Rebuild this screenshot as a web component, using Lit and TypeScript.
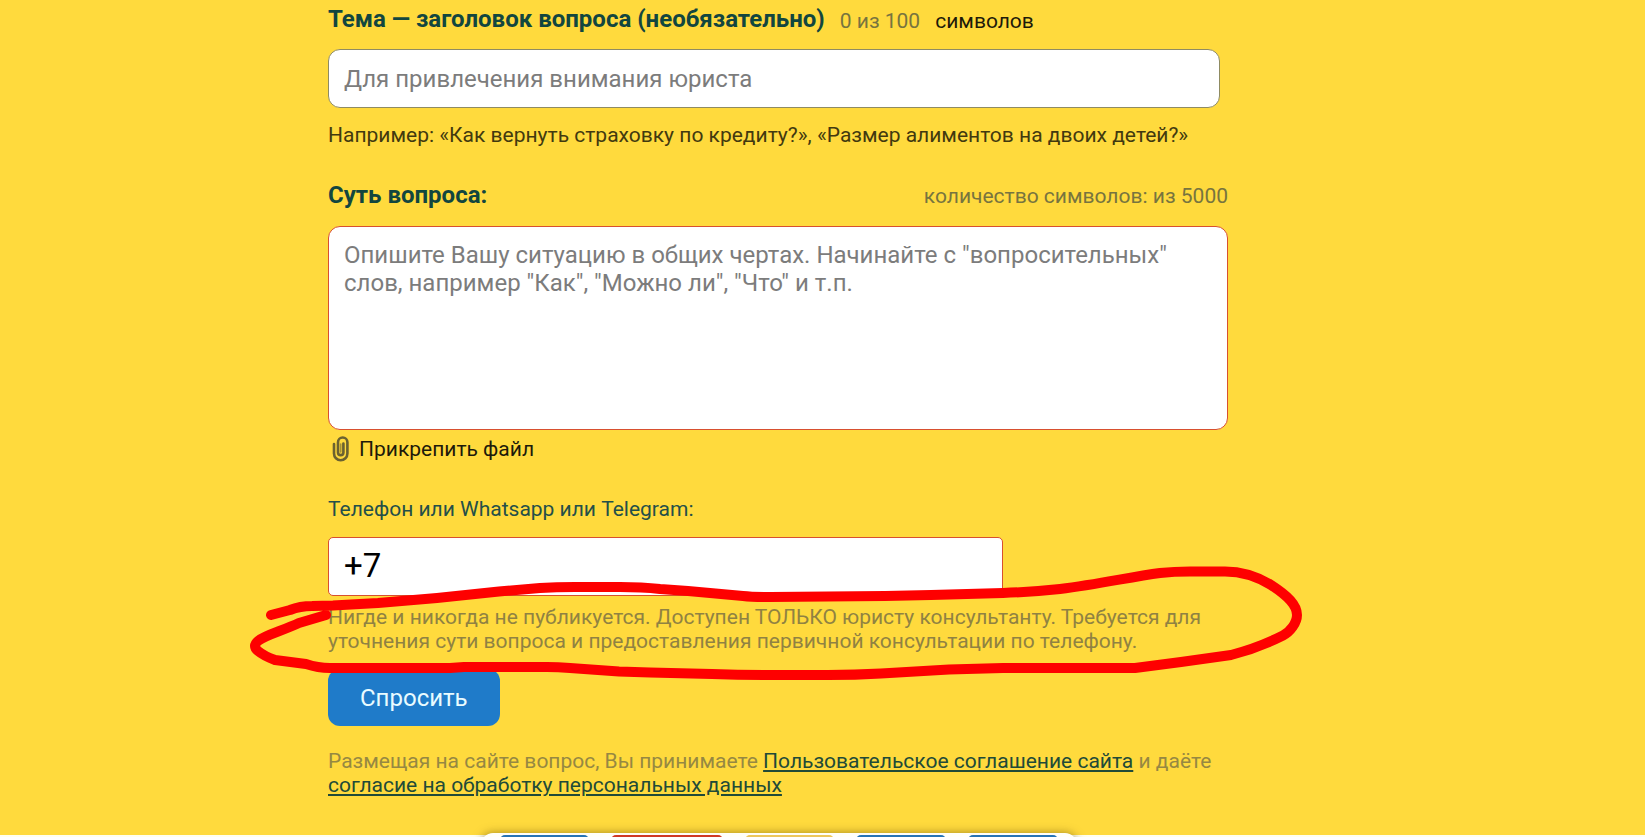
import { LitElement, html, css } from "lit";
import { customElement } from "lit/decorators.js";

@customElement("app-root")
export class AppRoot extends LitElement {
  static styles = css`
    :host {
      display: block;
      position: relative;
      height: 100vh;
      overflow: hidden;
      background: #fffff0;
      font-family: Roboto, "Noto Sans", sans-serif;
      font-size: 21px;
      line-height: 24px;
      color: #1d1a0a;
    }
    * {
      box-sizing: border-box;
    }
    .page {
      background: #ffda3d;
      padding: 5px 89px 38px 0;
    }
    .form {
      position: relative;
      max-width: 900px;
      margin: 0 auto;
    }
    .head {
      display: flex;
      align-items: flex-end;
      gap: 15px;
      padding-bottom: 16px;
    }
    .head.spread {
      justify-content: space-between;
      align-items: baseline;
      padding: 34px 0 17px;
    }
    .title {
      font-size: 24px;
      line-height: 28px;
      font-weight: 700;
      color: #12463f;
    }
    .meta {
      color: #77743f;
    }
    .field {
      display: block;
      width: 100%;
      margin: 0;
      padding: 0 15px;
      border: 1px solid #d8502f;
      border-radius: 12px;
      background: #fff;
      font: 400 24px/28px Roboto, "Noto Sans", sans-serif;
      color: #000;
      outline: none;
    }
    .field::placeholder {
      color: #7c7c7c;
      opacity: 1;
    }
    .topic {
      width: calc(100% - 8px);
      height: 59px;
      border-color: #8f8b62;
    }
    .body {
      height: 204px;
      padding: 14px 15px;
      resize: none;
    }
    .phone {
      width: 75%;
      height: 59px;
      padding-bottom: 2px;
      border-radius: 5px;
      font-size: 33px;
    }
    .example {
      margin: 15px 0 0;
      color: #42390f;
    }
    .attach {
      display: flex;
      align-items: center;
      gap: 10px;
      margin-top: 6px;
      padding: 0 0 0 4px;
      border: 0;
      background: none;
      font: inherit;
      color: inherit;
    }
    .clip {
      display: block;
      width: 17px;
      height: 26px;
    }
    .phone-label {
      display: block;
      padding: 35px 0 16px;
      color: #244f49;
    }
    .hint {
      margin: 9px 0 16px;
      color: #908242;
    }
    .send {
      display: block;
      height: 57px;
      padding: 0 32px;
      border: 0;
      border-radius: 12px;
      background: #1f7bc9;
      color: #e9fbff;
      font: 400 24px/28px Roboto, "Noto Sans", sans-serif;
    }
    .terms {
      margin: 23px 0 0;
      color: #968842;
    }
    .terms a {
      color: #214a38;
      text-decoration-thickness: 2px;
      text-underline-offset: 2px;
    }
    .scribble {
      position: absolute;
      left: -80px;
      top: 555px;
      width: 1060px;
      height: 130px;
      pointer-events: none;
    }
    .dock {
      position: absolute;
      left: calc(50% - 342px);
      top: calc(100% - 4px);
      display: flex;
      gap: 22px;
      width: 596px;
      height: 60px;
      padding: 2px 19px;
      border-radius: 12px;
      background: #fffffa;
      box-shadow: 0 0 10px rgba(90, 70, 0, 0.55);
    }
    .tile {
      flex: 89;
      border-radius: 5px;
      background: #2673b5;
    }
    .tile.red {
      flex: 111;
      background: #cf3a25;
    }
    .tile.sand {
      background: #ecc65c;
    }
  `;

  render() {
    return html`
      <main class="page">
        <form class="form" @submit=${(e: Event) => e.preventDefault()}>
          <div class="head">
            <label class="title" for="topic">Тема — заголовок вопроса (необязательно)</label>
            <span class="meta">0 из 100</span>
            <span>символов</span>
          </div>
          <input class="field topic" id="topic" type="text" placeholder="Для привлечения внимания юриста" />
          <p class="example">Например: «Как вернуть страховку по кредиту?», «Размер алиментов на двоих детей?»</p>

          <div class="head spread">
            <label class="title" for="body">Суть вопроса:</label>
            <span class="meta">количество символов: из 5000</span>
          </div>
          <textarea
            class="field body"
            id="body"
            placeholder='Опишите Вашу ситуацию в общих чертах. Начинайте с "вопросительных" слов, например "Как", "Можно ли", "Что" и т.п.'
          ></textarea>
          <button class="attach" type="button">
            <svg class="clip" viewBox="0 0 17 26" fill="none" stroke="#6b6230" stroke-width="2.6" stroke-linecap="round" aria-hidden="true">
              <path d="M2 8V17.500a6.700 6.700 0 0 0 13.400 0V6.200a4.700 4.700 0 0 0-9.400 0V16.400a2.700 2.700 0 0 0 5.400 0V7.500" />
              <path d="M8.700 8V16" stroke-width="1.600" opacity="0.600" />
            </svg>
            <span>Прикрепить файл</span>
          </button>

          <label class="phone-label" for="phone">Телефон или Whatsapp или Telegram:</label>
          <input class="field phone" id="phone" type="tel" value="+7" />
          <p class="hint">
            Нигде и никогда не публикуется. Доступен ТОЛЬКО юристу консультанту. Требуется для уточнения сути вопроса и
            предоставления первичной консультации по телефону.
          </p>
          <button class="send" type="submit">Спросить</button>
          <p class="terms">
            Размещая на сайте вопрос, Вы принимаете <a href="#terms">Пользовательское соглашение сайта</a> и даёте
            <a href="#privacy">согласие на обработку персональных данных</a>
          </p>

          <svg class="scribble" viewBox="248 560 1060 130" fill="none" stroke="#fe0000" stroke-width="10" stroke-linecap="round" stroke-linejoin="round" aria-hidden="true">
            <path
              d="M271 615L290 610Q300 606 312 606L333 605.500L378 603L437 598L499 591.500L540 588Q556 587 575 587H620Q642 587 660 589L688 591L743 596Q752 597 770 597L885 596L931 595L1003 593Q1032 592 1060 589C1100 584 1130 577 1160 573Q1174 571.500 1190 571.500H1225C1242 571.500 1258 577 1271 585C1288 596 1297 605 1297 615C1297 623 1290 632 1283 635.500C1268 643 1250 650 1231 655L1181 662L1135 668H1003L949 669.500L881 673.500Q855 675 828 675H770Q740 675 712 674L650 672.500L619 671.500L570 668Q558 667 547 667H464L450 668H330Q318 668 306 664L275 660Q264 656 258 651Q252 646 258 641C265 635 282 631 299 623L326 615"
            />
          </svg>
        </form>
      </main>
      <nav class="dock" aria-label="Поделиться">
        <span class="tile"></span>
        <span class="tile red"></span>
        <span class="tile sand"></span>
        <span class="tile"></span>
        <span class="tile"></span>
      </nav>
    `;
  }
}
